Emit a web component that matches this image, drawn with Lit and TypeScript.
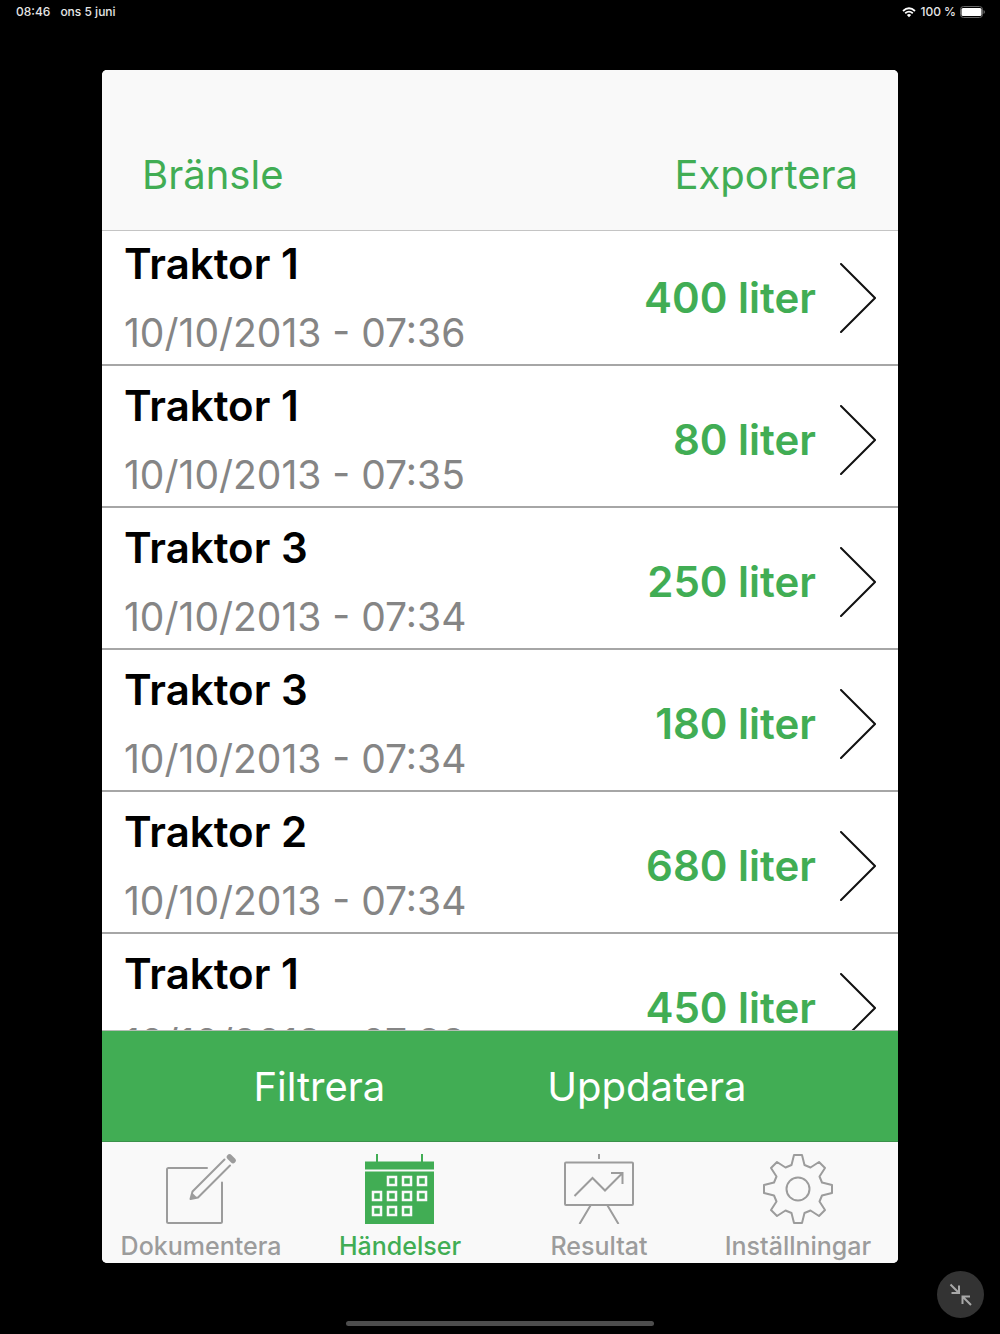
import { LitElement, html, css, svg } from "lit";
import { customElement, property } from "lit/decorators.js";

interface FuelEvent {
  machine: string;
  time: string;
  amount: string;
}

const EVENTS: FuelEvent[] = [
  { machine: "Traktor 1", time: "10/10/2013 - 07:36", amount: "400 liter" },
  { machine: "Traktor 1", time: "10/10/2013 - 07:35", amount: "80 liter" },
  { machine: "Traktor 3", time: "10/10/2013 - 07:34", amount: "250 liter" },
  { machine: "Traktor 3", time: "10/10/2013 - 07:34", amount: "180 liter" },
  { machine: "Traktor 2", time: "10/10/2013 - 07:34", amount: "680 liter" },
  { machine: "Traktor 1", time: "10/10/2013 - 07:33", amount: "450 liter" },
];

const GEAR_STEPS = [
  [-4, -34], [4, -34], [6.5, -24], [12.5, -21.5], [21, -27], [27, -21], [21.5, -12.5], [24, -6.5],
  [34, -4], [34, 4], [24, 6.5], [21.5, 12.5], [27, 21], [21, 27], [12.5, 21.5], [6.5, 24],
  [4, 34], [-4, 34], [-6.5, 24], [-12.5, 21.5], [-21, 27], [-27, 21], [-21.5, 12.5], [-24, 6.5],
  [-34, 4], [-34, -4], [-24, -6.5], [-21.5, -12.5], [-27, -21], [-21, -27], [-12.5, -21.5], [-6.5, -24],
];

const CALENDAR_DAYS = [
  [27, 27], [42, 27], [57, 27],
  [12, 42], [27, 42], [42, 42], [57, 42],
  [12, 57], [27, 57], [42, 57],
];

const ICONS = {
  compose: svg`
    <g fill="none" stroke="currentColor" stroke-width="2" stroke-linecap="round" stroke-linejoin="round">
      <path d="M41 14H2.500Q1 14 1 15.500V67.500Q1 69 2.500 69H54.500Q56 69 56 67.500V28.500"/>
      <path d="M58.500 5.500L26.500 37.500L24.500 45L32 43.500L64 11.500"/>
    </g>
    <path d="M26.500 39L31 43.500L24 45.500Z" fill="currentColor"/>
    <path d="M63.500 3L67 6.500" stroke="currentColor" stroke-width="5.500" stroke-linecap="round"/>`,
  calendar: svg`
    <path d="M12 0V8M57 0V8" stroke="currentColor" stroke-width="2"/>
    <path d="M0 7.500H69V15.500H0ZM0 17.500H69V70H0Z" fill="currentColor"/>
    ${CALENDAR_DAYS.map(([x, y]) => svg`<rect x=${x - 4} y=${y - 4} width="8" height="8" fill="none" stroke="#f9f9f9" stroke-width="2.500"/>`)}`,
  board: svg`
    <g fill="none" stroke="currentColor" stroke-width="2">
      <path d="M35 0V5"/>
      <rect x="1" y="8.500" width="68" height="42.500" rx="1"/>
      <path d="M10.500 42L28.500 24L41 36.500L58.500 19M47 19H58.500V30M26.500 51.500L15.500 70M43.500 51.500L54.500 70"/>
    </g>`,
  gear: svg`
    <g fill="none" stroke="currentColor" stroke-width="2" stroke-linejoin="round">
      <polygon points=${GEAR_STEPS.map(([x, y]) => `${x + 35},${y + 35}`).join(" ")}/>
      <circle cx="35" cy="35" r="11.500"/>
    </g>`,
};

type IconName = keyof typeof ICONS;

const TABS: { label: string; icon: IconName; active?: boolean }[] = [
  { label: "Dokumentera", icon: "compose" },
  { label: "Händelser", icon: "calendar", active: true },
  { label: "Resultat", icon: "board" },
  { label: "Inställningar", icon: "gear" },
];

@customElement("status-bar")
class StatusBar extends LitElement {
  static styles = css`
    :host {
      display: flex;
      justify-content: space-between;
      align-items: center;
      height: 24px;
      padding: 0 15px 0 16px;
      color: #e6e6e6;
      font-size: 12px;
      font-weight: 500;
      line-height: 24px;
    }
    .side { display: flex; align-items: center; }
    .left { gap: 10px; }
    .right { gap: 4px; }
    svg { display: block; }
  `;

  render() {
    return html`
      <div class="side left"><span>08:46</span><span>ons 5 juni</span></div>
      <div class="side right">
        <svg width="14" height="11" viewBox="0 0 14 11" aria-hidden="true">
          <g fill="none" stroke="#fff" stroke-width="1.800">
            <path d="M1 4Q7 -1.500 13 4"/>
            <path d="M3.200 6.300Q7 3 10.800 6.300"/>
          </g>
          <path d="M4.900 8Q7 6.200 9.100 8L7 10.300Z" fill="#fff"/>
        </svg>
        <span>100 %</span>
        <svg width="25" height="12" viewBox="0 0 25 12" aria-hidden="true">
          <rect x="0.500" y="0.500" width="22" height="11" rx="3" fill="none" stroke="#666"/>
          <rect x="1.500" y="2" width="20" height="8" rx="1.500" fill="#fff"/>
          <path d="M23.500 4V8Q25 7.500 25 6T23.500 4Z" fill="#666"/>
        </svg>
      </div>
    `;
  }
}

@customElement("event-row")
class EventRow extends LitElement {
  @property({ attribute: false }) event!: FuelEvent;

  static styles = css`
    :host { display: block; }
    .row {
      display: flex;
      align-items: center;
      gap: 24px;
      box-sizing: border-box;
      width: 100%;
      height: 142px;
      padding: 8px 22px 0;
      border: 0;
      border-bottom: 2px solid #a6a6a6;
      background: #fff;
      font: inherit;
      text-align: left;
      white-space: nowrap;
    }
    .info { display: flex; flex: 1; flex-direction: column; }
    .machine { color: #000; font-size: 42px; font-weight: 600; line-height: 70px; }
    .time { color: #858585; font-size: 39px; font-weight: 400; line-height: 68px; }
    .amount { color: #41ad54; font-size: 42px; font-weight: 600; line-height: 70px; }
    .chevron { flex: none; }
  `;

  render() {
    return html`
      <button class="row" type="button">
        <span class="info">
          <span class="machine">${this.event.machine}</span>
          <span class="time">${this.event.time}</span>
        </span>
        <span class="amount">${this.event.amount}</span>
        <svg class="chevron" width="36" height="70" viewBox="0 0 36 70" aria-hidden="true">
          <path d="M1 1L35 35L1 69" fill="none" stroke="#111" stroke-width="2" stroke-linecap="round"/>
        </svg>
      </button>
    `;
  }
}

@customElement("tab-bar")
class TabBar extends LitElement {
  static styles = css`
    :host { display: block; }
    .tabs {
      display: grid;
      grid-template-columns: repeat(4, minmax(0, 1fr));
      padding: 12px 0 1px;
      background: #f9f9f9;
    }
    .tab {
      display: flex;
      flex-direction: column;
      align-items: center;
      gap: 6px;
      padding: 0 1px 0 0;
      border: 0;
      background: none;
      color: #9c9c9c;
      font-family: inherit;
      font-size: 25px;
      font-weight: 500;
      line-height: 32px;
      white-space: nowrap;
    }
    .active { color: #41ad54; }
  `;

  render() {
    return html`
      <nav class="tabs">
        ${TABS.map(
          (tab) => html`
            <button class="tab ${tab.active ? "active" : ""}" type="button">
              <svg width="70" height="70" viewBox="0 0 70 70" aria-hidden="true">${ICONS[tab.icon]}</svg>
              <span>${tab.label}</span>
            </button>
          `,
        )}
      </nav>
    `;
  }
}

@customElement("app-root")
class AppRoot extends LitElement {
  static styles = css`
    :host {
      position: relative;
      display: flex;
      flex-direction: column;
      height: 100vh;
      background: #000;
      font-family: Inter, "Liberation Sans", sans-serif;
    }
    .stage {
      display: flex;
      flex: 1;
      min-height: 0;
      padding: 46px 102px 71px;
    }
    .card {
      display: flex;
      flex: 1;
      flex-direction: column;
      min-width: 0;
      overflow: hidden;
      border-radius: 5px;
      background: #fff;
    }
    .header {
      display: flex;
      justify-content: space-between;
      padding: 80px 40px 30px;
      border-bottom: 1px solid #c4c4c4;
      background: #f9f9f9;
    }
    .link, .action {
      padding: 0;
      border: 0;
      background: none;
      font-family: inherit;
      font-size: 40px;
      font-weight: 400;
      line-height: 50px;
    }
    .link { color: #41ad54; }
    .action { color: #fff; }
    .viewport { flex: 1; min-height: 0; overflow: hidden; }
    .list { margin: -7px 0 0; padding: 0; list-style: none; }
    .actions {
      display: flex;
      justify-content: center;
      gap: 162px;
      padding: 31px 0 29px;
      border-top: 1px solid #b5bdb6;
      border-bottom: 1px solid #3a914a;
      background: #41ad54;
    }
    .home {
      position: absolute;
      bottom: 8px;
      left: 50%;
      width: 308px;
      height: 5px;
      margin-left: -154px;
      border-radius: 3px;
      background: #4d4d4d;
    }
    .shrink {
      position: absolute;
      right: 16px;
      bottom: 16px;
      width: 47px;
      height: 47px;
      padding: 0;
      border: 0;
      border-radius: 50%;
      background: #333;
    }
    .shrink svg { display: block; }
  `;

  render() {
    return html`
      <status-bar></status-bar>
      <main class="stage">
        <section class="card">
          <header class="header">
            <button class="link" type="button">Bränsle</button>
            <button class="link" type="button">Exportera</button>
          </header>
          <div class="viewport">
            <ul class="list">
              ${EVENTS.map((event) => html`<li><event-row .event=${event}></event-row></li>`)}
            </ul>
          </div>
          <div class="actions">
            <button class="action" type="button">Filtrera</button>
            <button class="action" type="button">Uppdatera</button>
          </div>
          <tab-bar></tab-bar>
        </section>
      </main>
      <div class="home"></div>
      <button class="shrink" type="button" aria-label="Förminska">
        <svg width="47" height="47" viewBox="0 0 47 47" aria-hidden="true">
          <path d="M13.500 13.500L21.500 21.500M22 14.500V22H14.500M34 34L26 26M25.500 33V25.500H33" fill="none" stroke="#a8a8a8" stroke-width="2"/>
        </svg>
      </button>
    `;
  }
}
